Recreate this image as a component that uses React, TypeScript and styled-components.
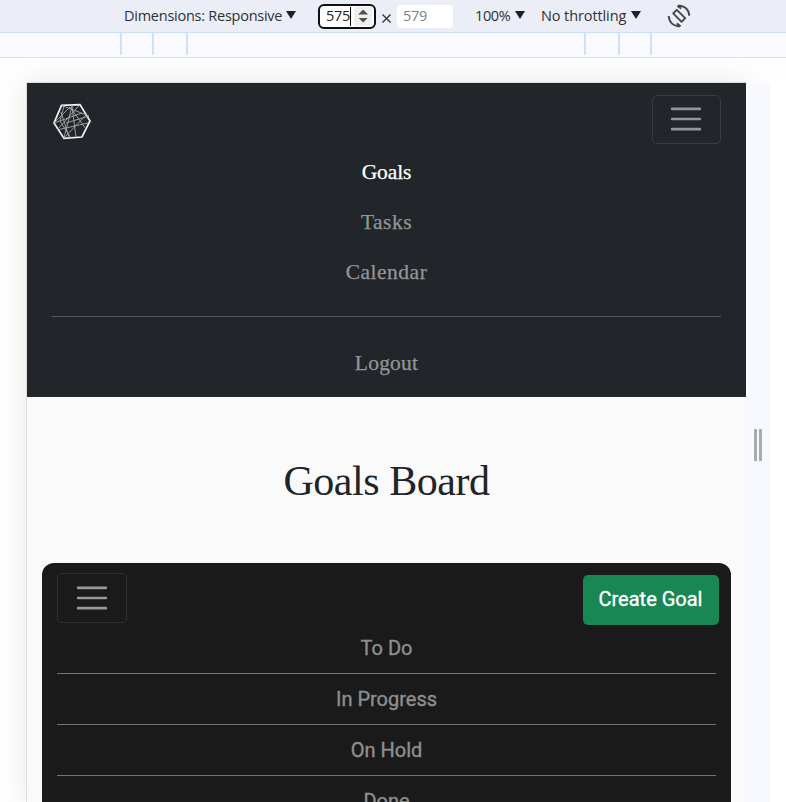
import React from 'react';
import styled, { createGlobalStyle } from 'styled-components';

const GlobalStyle = createGlobalStyle`
  * { box-sizing: border-box; }
  html, body { margin: 0; height: 802px; overflow: hidden; background: #fff; }
`;

const Screen = styled.div`
  display: flex;
  flex-direction: column;
  width: 786px;
  height: 802px;
  overflow: hidden;
  background: #fefefe;
`;

const Toolbar = styled.div`
  display: flex;
  align-items: center;
  flex: none;
  height: 32px;
  padding-left: 124px;
  background: #ebeef6;
  color: #303136;
  font: 400 14.5px/32px 'Open Sans', sans-serif;
`;

const Select = styled.span<{ $width: number; $spacing: number; $gap: number }>`
  display: flex;
  align-items: center;
  justify-content: space-between;
  flex: none;
  width: ${(p) => p.$width}px;
  margin-right: ${(p) => p.$gap}px;
  letter-spacing: ${(p) => p.$spacing}px;
  white-space: nowrap;
`;

const Caret = styled.i`
  flex: none;
  width: 10px;
  height: 8px;
  margin-bottom: 2px;
  background: #202124;
  clip-path: polygon(0 0, 100% 0, 50% 100%);
`;

const SizeField = styled.span<{ $active?: boolean }>`
  display: flex;
  align-items: center;
  flex: none;
  width: ${(p) => (p.$active ? 58 : 56)}px;
  height: ${(p) => (p.$active ? 25 : 23)}px;
  padding-left: 6px;
  border: ${(p) => (p.$active ? '2px solid #101012' : 'none')};
  border-radius: ${(p) => (p.$active ? 6 : 4)}px;
  background: #fff;
  color: ${(p) => (p.$active ? '#202124' : '#808080')};
  letter-spacing: -0.25px;
`;

const TextCursor = styled.i`
  width: 1px;
  height: 19px;
  background: #000;
`;

const Spinner = styled.span`
  display: flex;
  flex-direction: column;
  align-items: center;
  justify-content: center;
  gap: 3px;
  width: 18px;
  height: 19px;
  margin-left: 3px;
  background: #efefef;
`;

const SpinArrow = styled.i<{ $down?: boolean }>`
  width: 10px;
  height: 5px;
  background: #505050;
  clip-path: ${(p) => (p.$down ? 'polygon(0 0, 100% 0, 50% 100%)' : 'polygon(50% 0, 100% 100%, 0 100%)')};
`;

const Times = styled.svg`
  flex: none;
  width: 9px;
  height: 9px;
  margin: 5px 6px 0;
`;

const ZoomGroup = styled.span`
  display: flex;
  align-items: center;
  padding-left: 22px;
`;

const RotateSvg = styled.svg`
  flex: none;
  width: 24px;
  height: 24px;
`;

const Ruler = styled.div`
  display: grid;
  grid-template-columns: 120px 32px 34px 398px 34px 32px 1fr;
  flex: none;
  height: 26px;
  padding-bottom: 2px;
  border-top: 1px solid #cfe0fc;
  border-bottom: 1px solid #d3e3fd;
  background: #f8fafe;
`;

const Tick = styled.i`
  border-left: 2px solid #d0e1fd;
`;

const Stage = styled.div`
  display: flex;
  flex: 1;
  min-height: 0;
  padding: 24px 0 0 26px;
`;

const Viewport = styled.div`
  display: flex;
  flex-direction: column;
  flex: none;
  width: 720px;
  border: solid #dedee0;
  border-width: 1px 0 0 1px;
  background: #fafafa;
  box-shadow: 0 0 26px rgba(0, 0, 0, 0.09);
`;

const ResizeRail = styled.div`
  display: flex;
  gap: 2px;
  z-index: 1;
  width: 24px;
  margin-top: 1px;
  padding: 346px 0 0 8px;
  background: #f8f9fe;
`;

const Grip = styled.i`
  width: 3px;
  height: 32px;
  background: #abadad;
`;

const RightMargin = styled.div`
  z-index: 1;
  width: 16px;
  background: #fff;
`;

const Navbar = styled.nav`
  display: flex;
  flex-direction: column;
  flex: none;
  height: 314px;
  padding: 12px 25px 0;
  background: #22252a;
`;

const Row = styled.div<{ $height: number }>`
  display: flex;
  justify-content: space-between;
  align-items: flex-start;
  flex: none;
  height: ${(p) => p.$height}px;
`;

const Logo = styled.svg`
  width: 40px;
  height: 38px;
  margin-top: 8px;
`;

const Toggler = styled.button<{ $width: number; $height: number; $line: string; $inset?: string }>`
  display: flex;
  align-items: center;
  justify-content: center;
  width: ${(p) => p.$width}px;
  height: ${(p) => p.$height}px;
  padding: ${(p) => p.$inset ?? '0'};
  border: 1px solid ${(p) => p.$line};
  border-radius: 5px;
  background: transparent;
`;

const NavLink = styled.a<{ $active?: boolean; $spacing: number }>`
  flex: none;
  height: 50px;
  color: ${(p) => (p.$active ? '#fff' : '#939597')};
  font: 400 21.5px/50px 'Liberation Serif', serif;
  letter-spacing: ${(p) => p.$spacing}px;
  text-align: center;
  -webkit-text-stroke: 0.25px currentColor;
`;

const Divider = styled.hr`
  flex: none;
  width: 100%;
  height: 1px;
  margin: 19px 0 21px;
  border: 0;
  background: #55585b;
`;

const Title = styled.h1`
  flex: none;
  height: 166px;
  margin: 0;
  color: #212529;
  font: 400 42px/168px 'Liberation Serif', serif;
  letter-spacing: -0.45px;
  text-align: center;
`;

const Board = styled.section`
  flex: 1;
  min-height: 0;
  margin: 0 15px;
  padding: 10px 12px 0 15px;
  overflow: hidden;
  border-radius: 12px 12px 0 0;
  background: #1a1a1a;
`;

const CreateButton = styled.button`
  width: 136px;
  height: 50px;
  margin-top: 2px;
  padding: 0 1px 2px 0;
  border: 0;
  border-radius: 5px;
  background: #198754;
  color: #fff;
  font: 400 20px Roboto, sans-serif;
  white-space: nowrap;
  -webkit-text-stroke: 0.35px currentColor;
`;

const StatusList = styled.div`
  margin-right: 3px;
`;

const Status = styled.div`
  height: 51px;
  border-bottom: 1px solid #6c757d;
  color: #8f8f8f;
  font: 400 20px/50px Roboto, sans-serif;
  text-align: center;
  -webkit-text-stroke: 0.35px currentColor;
`;

const MenuIcon = ({ color }: { color: string }) => (
  <svg width="38" height="38" viewBox="0 0 30 30">
    <path d="M4 7h22M4 15h22M4 23h22" stroke={color} strokeWidth="2" strokeLinecap="round" strokeMiterlimit="10" />
  </svg>
);

const RotateIcon = () => (
  <RotateSvg viewBox="0 0 24 24" fill="none" stroke="#45474b" strokeWidth="1.9">
    <path d="M6.2 9.4 9.8 5.8 18.2 14.2 14.6 17.8Z" strokeLinejoin="round" />
    <path d="M11 1.8C17.5 1.2 22 5.6 22.3 11.7M13 22.2C6.5 22.8 2 18 1.7 12" />
    <path d="m10 2.2 4-1-.2 3.8ZM14 21.8l-4 1 .2-3.8Z" fill="#45474b" strokeWidth="1" />
  </RotateSvg>
);

const LogoMark = () => (
  <Logo viewBox="0 0 40 38" fill="none">
    <path d="M9.5 2.4 28 1.6 38 18 30 34 12 35.4 2 20Z" stroke="#f2f3f4" strokeWidth="1.7" />
    <path
      d="M9.5 2.4 37 13 14 20M28 1.6 5 27M12 3 8 18 19 35M2 20 18 4 34 26M2 20 30 10M5 27 36 20M12 35 20 3 24 34M12 35 34 12M9 9 17 34"
      stroke="#a7aaac"
      strokeWidth="0.9"
    />
  </Logo>
);

const statuses = ['To Do', 'In Progress', 'On Hold', 'Done'];

export default function App() {
  return (
    <>
      <GlobalStyle />
      <Screen>
        <Toolbar>
          <Select $width={172} $spacing={-0.25} $gap={22}>
            Dimensions: Responsive <Caret />
          </Select>
          <SizeField $active>
            575
            <TextCursor />
            <Spinner>
              <SpinArrow />
              <SpinArrow $down />
            </Spinner>
          </SizeField>
          <Times viewBox="0 0 9 9">
            <path d="m.5.5 8 8m0-8-8 8" stroke="#303136" strokeWidth="1.3" />
          </Times>
          <SizeField>579</SizeField>
          <ZoomGroup>
            <Select $width={50} $spacing={-0.4} $gap={16}>
              100% <Caret />
            </Select>
            <Select $width={100} $spacing={-0.1} $gap={26}>
              No throttling <Caret />
            </Select>
          </ZoomGroup>
          <RotateIcon />
        </Toolbar>
        <Ruler>
          <span />
          <Tick />
          <Tick />
          <Tick />
          <Tick />
          <Tick />
          <Tick />
        </Ruler>
        <Stage>
          <Viewport>
            <Navbar>
              <Row $height={52}>
                <LogoMark />
                <Toggler $width={69} $height={49} $line="#393c41" $inset="0 1px 1px 0" aria-label="Toggle navigation">
                  <MenuIcon color="#949599" />
                </Toggler>
              </Row>
              <NavLink $active $spacing={-0.1}>Goals</NavLink>
              <NavLink $spacing={0.5}>Tasks</NavLink>
              <NavLink $spacing={0.5}>Calendar</NavLink>
              <Divider />
              <NavLink $spacing={0.2}>Logout</NavLink>
            </Navbar>
            <Title>Goals Board</Title>
            <Board>
              <Row $height={50}>
                <Toggler $width={70} $height={50} $line="#313131" aria-label="Toggle board menu">
                  <MenuIcon color="#999" />
                </Toggler>
                <CreateButton>Create Goal</CreateButton>
              </Row>
              <StatusList>
                {statuses.map((name) => (
                  <Status key={name}>{name}</Status>
                ))}
              </StatusList>
            </Board>
          </Viewport>
          <ResizeRail>
            <Grip />
            <Grip />
          </ResizeRail>
          <RightMargin />
        </Stage>
      </Screen>
    </>
  );
}
